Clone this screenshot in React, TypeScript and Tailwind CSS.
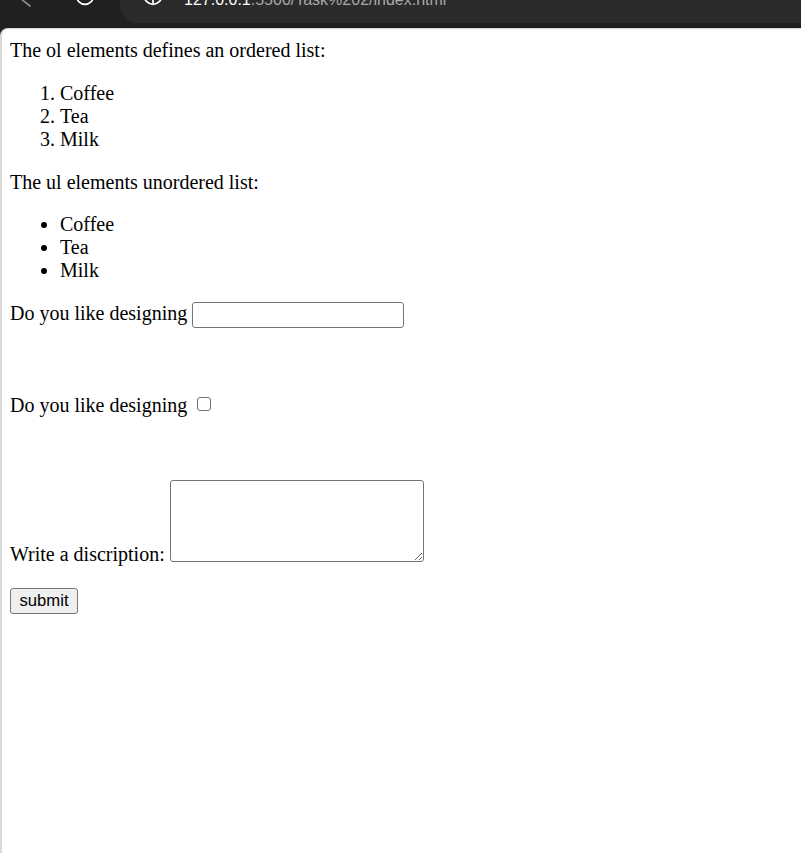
import React from "react";

export default function App() {
  return (
    <div className="w-[801px] h-[853px] bg-[#202020] flex flex-col overflow-hidden">
      {/* browser chrome (mostly cut off) */}
      <div className="h-[28px] shrink-0 flex items-start overflow-hidden">
        <svg width="120" height="28" viewBox="0 0 120 28" className="shrink-0">
          <path d="M16 -5 L30 6" stroke="#8c8c8c" strokeWidth="1.6" fill="none" strokeLinecap="round" />
          <circle cx="85" cy="-4" r="8.4" stroke="#ffffff" strokeWidth="1.7" fill="none" />
        </svg>
        <div className="flex-1 h-[23px] bg-[#2b2b2b] rounded-bl-[18px] flex items-start overflow-hidden">
          <svg width="64" height="23" viewBox="0 0 64 23" className="shrink-0">
            <circle cx="33" cy="-4.5" r="8.8" stroke="#ffffff" strokeWidth="1.7" fill="none" />
            <path d="M33 -4 L33 2.8" stroke="#ffffff" strokeWidth="1.7" strokeLinecap="round" />
          </svg>
          <span className="block -mt-[8.5px] leading-[16px] text-[16px] font-['Liberation_Sans',Arial,sans-serif] whitespace-nowrap">
            <span className="text-white">127.0.0.1</span>
            <span className="text-[#a8a8a8]">:5500/Task%202/index.html</span>
          </span>
        </div>
      </div>

      {/* page */}
      <div className="flex-1 bg-white rounded-tl-[8px] border-t border-l-2 border-[#d9d9d9] pl-[8px] font-['Liberation_Serif','Times_New_Roman',serif] text-[20px] leading-[23px] text-black">
        <p className="mt-[10px]">The ol elements defines an ordered list:</p>
        <ol className="mt-[20px] list-decimal pl-[50px]">
          <li>Coffee</li>
          <li>Tea</li>
          <li>Milk</li>
        </ol>
        <p className="mt-[20px]">The ul elements unordered list:</p>
        <ul className="mt-[19px] list-disc pl-[50px]">
          <li>Coffee</li>
          <li>Tea</li>
          <li>Milk</li>
        </ul>

        <form className="flex flex-col items-start" onSubmit={(e) => e.preventDefault()}>
          <div className="mt-[20px] flex items-start">
            <span className="whitespace-nowrap">Do you like designing</span>
            <input
              type="text"
              className="ml-[5px] w-[212px] h-[26px] border border-[#767676] rounded-[3px] bg-white px-[2px] text-[16px] outline-none"
            />
          </div>

          <div className="mt-[66px] flex items-start">
            <span className="whitespace-nowrap">Do you like designing</span>
            <input
              type="checkbox"
              className="appearance-none ml-[10px] mt-[3px] w-[14px] h-[14px] border border-[#767676] rounded-[3px] bg-white"
            />
          </div>

          <div className="mt-[63px] flex items-start">
            <span className="whitespace-nowrap mt-[63px]">Write a discription:</span>
            <textarea className="ml-[5px] w-[254px] h-[82px] border border-[#767676] rounded-[3px] bg-white resize outline-none" />
          </div>

          <button
            type="submit"
            className="mt-[22px] w-[68px] h-[26px] bg-[#efefef] border border-[#767676] rounded-[3px] font-['Liberation_Sans',Arial,sans-serif] text-[16.67px] leading-[20px] text-black flex items-center justify-center"
          >
            submit
          </button>
        </form>
      </div>
    </div>
  );
}
